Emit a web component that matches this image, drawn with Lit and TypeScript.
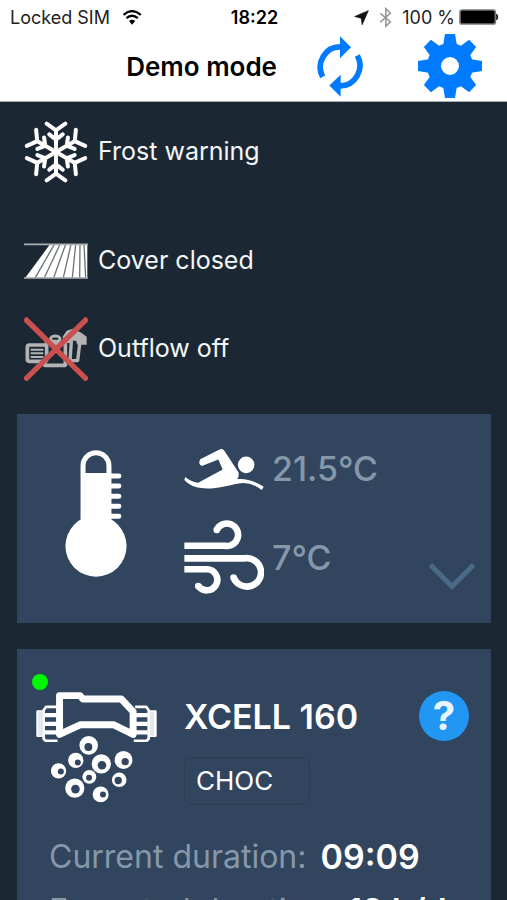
import { LitElement, html, css, svg } from "lit";
import { customElement } from "lit/decorators.js";

const wifiIcon = html`<svg class="wifi" viewBox="368 26 60 46" aria-hidden="true">
  <path d="M372 41 Q398 18 425 41" fill="none" stroke="#000" stroke-width="7" />
  <path d="M381 51 Q398 36 416 51" fill="none" stroke="#000" stroke-width="7" />
  <path d="M389 60 Q398 52 408 60 L398 71Z" fill="#000" />
</svg>`;

const locationIcon = html`<svg class="location" viewBox="306 28 46 46" aria-hidden="true">
  <path d="M350 30 L308 48 L328 53 L331 73Z" fill="#111" stroke="#111" stroke-width="2" />
</svg>`;

const bluetoothIcon = html`<svg class="bluetooth" viewBox="377 20 40 62" aria-hidden="true">
  <path d="M381 38 L412 64 L398 78 V24 L412 38 L381 65" fill="none" stroke="#9a9a9a" stroke-width="5" />
</svg>`;

const batteryIcon = html`<svg class="battery" viewBox="618 28 120 48" aria-hidden="true">
  <rect x="621" y="31" width="106" height="42" rx="7" fill="#000" stroke="#777" stroke-width="5" />
  <path d="M731 43 Q738 52 731 61Z" fill="#000" stroke="#000" stroke-width="2" />
</svg>`;

const refreshIcon = html`<svg class="refresh-icon" viewBox="191 105 138 182" aria-hidden="true">
  <g fill="none" stroke="currentColor" stroke-width="17">
    <path d="M208 227 A59 61 0 0 1 262 137" />
    <path d="M312 163 A59 61 0 0 1 260 254" />
  </g>
  <path d="M260 105 L293 138 L260 171Z M262 221 L228 253 L262 287Z" fill="currentColor" />
</svg>`;

const gearIcon = html`<svg class="gear-icon" viewBox="-32 -32 64 64" aria-hidden="true">
  <g fill="currentColor">
    ${[0, 45, 90, 135, 180, 225, 270, 315].map(
      (a) => svg`<path d="M-7 -20 L-5 -32 H5 L7 -20Z" transform="rotate(${a})" />`
    )}
  </g>
  <circle r="16" fill="none" stroke="currentColor" stroke-width="14" />
</svg>`;

const snowIcon = html`<svg class="snow" viewBox="-96 -93 192 186" aria-hidden="true">
  <g fill="none" stroke="#fff" stroke-width="12" stroke-linecap="round">
    ${[0, 60, 120, 180, 240, 300].map(
      (a) => svg`<path d="M0 0 V-66 M-28 -85 L0 -65 L28 -85 M-20 -53 L0 -37 L20 -53" transform="rotate(${a})" />`
    )}
  </g>
</svg>`;

const coverIcon = html`<svg class="cover" viewBox="44 38 192 108" aria-hidden="true">
  <path d="M122 42 H234 V142 H48Z" fill="#fff" />
  <g stroke="#6d7478" stroke-width="4">
    <path d="M135 42 L78 142 M152 42 L105 142 M169 42 L133 142 M185 42 L162 142 M199 42 L189 142 M212 42 L211 142 M224 42 L229 142" />
  </g>
  <path d="M44 42 H236 M44 143 H236" stroke="#a9b0b4" stroke-width="5" />
</svg>`;

const outflowIcon = html`<svg class="outflow" viewBox="44 262 192 190" aria-hidden="true">
  <g fill="none" stroke="#b3b3b3" stroke-width="11" stroke-linejoin="round">
    <rect x="54" y="345" width="58" height="49" rx="6" />
    <path d="M64 359 H102 M64 370 H102 M64 381 H102" stroke-width="6" />
    <path d="M106 340 H168 V406 H106 V392" />
    <ellipse cx="138" cy="326" rx="14" ry="8" stroke-width="9" />
    <path d="M124 332 V342 M152 332 V342" />
    <path d="M172 334 H186 L182 392 H205 L212 334" stroke-width="10" />
  </g>
  <path d="M160 320 L172 302 L190 296 L216 308 L232 320 V344 H204 L200 332 H162Z" fill="#b3b3b3" />
  <path d="M46 265 L234 450 M234 265 L46 450" stroke="#c9504f" stroke-width="16" />
</svg>`;

const thermometerIcon = html`<svg class="thermometer" viewBox="45 45 186 382" aria-hidden="true">
  <path d="M99 260 V92 A39 39 0 0 1 177 92 V260" fill="none" stroke="#fff" stroke-width="15" />
  <path d="M95 114 H180 V270 H95Z" fill="#fff" />
  <circle cx="138" cy="334" r="92" fill="#fff" />
  <path d="M178 123 H207 M178 153 H207 M178 184 H207 M178 214 H207 M178 244 H207" stroke="#fff" stroke-width="15" stroke-linecap="round" />
</svg>`;

const swimmerIcon = html`<svg class="swimmer" viewBox="42 38 240 127" aria-hidden="true">
  <path d="M90 72 L150 42 Q158 38 163 46 L206 112 Q208 128 202 132 Q240 128 282 155 L276 165 Q240 138 206 145 C170 152 140 162 100 160 Q62 158 42 135 L45 126 Q60 140 84 143 L158 103 L145 73 L97 92 Q82 88 90 72Z" fill="#fff" />
  <circle cx="229" cy="89" r="25" fill="#fff" />
</svg>`;

const windIcon = html`<svg class="wind" viewBox="42 254 240 227" aria-hidden="true">
  <g fill="none" stroke="#fff" stroke-width="20">
    <path d="M42 332 H164 A34 34 0 1 0 140 284" />
    <path d="M42 370 H225 A43 43 0 1 1 191 428" />
    <path d="M42 403 H112 A32 32 0 1 1 84 454" />
  </g>
  <g fill="#fff"><circle cx="140" cy="284" r="10" /><circle cx="191" cy="428" r="10" /><circle cx="84" cy="454" r="10" /></g>
</svg>`;

const chevronIcon = html`<svg class="chevron-icon" viewBox="86 69 138 80" aria-hidden="true">
  <path d="M90 74 L155 139 L220 74" fill="none" stroke="#4b6a87" stroke-width="15" />
</svg>`;

const bubbles = [
  [206, 257, 28, 205, 262, 12],
  [167, 302, 23, 173, 309, 9],
  [244, 313, 29, 246, 317, 13],
  [311, 301, 27, 316, 306, 11],
  [115, 334, 23, 122, 336, 9],
  [208, 352, 21, 207, 355, 9],
  [298, 361, 22, 295, 363, 11],
  [164, 386, 29, 166, 389, 13],
  [242, 405, 24, 249, 405, 9],
];

const cellIcon = html`<svg class="cell" viewBox="47 97 365 333" aria-hidden="true">
  <path d="M118 224 V107 H180 L188 117 H304 L340 155 V224 L282 195 H180Z" fill="none" stroke="#fff" stroke-width="21" stroke-linejoin="round" />
  <g fill="none" stroke="#fff" stroke-width="8" stroke-linejoin="round">
    <path d="M111 141 H77 L70 151 V237 L76 243 H112 M70 155 H52 V228 H70" />
    <path d="M346 141 H380 L387 151 V237 L381 243 H342 M387 155 H407 V228 H387" />
  </g>
  <path d="M73 166 H112 M73 192 H112 M73 218 H112 M345 166 H384 M345 192 H384 M345 218 H384" stroke="#fff" stroke-width="13" />
  <path d="M61 156 V228 M397 156 V228" stroke="#e4e8ec" stroke-width="14" />
  ${bubbles.map(
    ([x, y, r, hx, hy, hr]) => svg`<circle cx=${x} cy=${y} r=${r} fill="#fff" /><circle cx=${hx} cy=${hy} r=${hr} fill="#31455f" />`
  )}
</svg>`;

@customElement("app-root")
export class AppRoot extends LitElement {
  static styles = css`
    :host {
      display: flex;
      flex-direction: column;
      height: 100vh;
      overflow: hidden;
      background: #1b2833;
      color: #f4f7fa;
      font-family: Inter, "Liberation Sans", sans-serif;
    }
    * { box-sizing: border-box; }
    svg { display: block; flex: none; }
    h1, h2, ul, dl, dd, dt, p { margin: 0; padding: 0; font-weight: 400; }
    button {
      display: block;
      flex: none;
      border: 0;
      padding: 0;
      background: none;
      color: #007aff;
      font: inherit;
      cursor: pointer;
    }
    header {
      flex: none;
      background: #fff;
      color: #000;
      border-bottom: 1px solid #a5abb0;
    }
    .status {
      display: grid;
      grid-template-columns: 1fr auto 1fr;
      align-items: center;
      height: 34px;
      padding: 0 8px 0 10px;
      font-size: 18px;
      color: #222;
    }
    .side { display: flex; align-items: center; gap: 12px; }
    .end { justify-content: flex-end; gap: 4px; }
    .clock { font-weight: 600; color: #000; }
    .wifi { width: 20px; height: 15px; }
    .location { width: 15px; height: 15px; }
    .bluetooth { width: 13px; height: 21px; margin: 0 6px; }
    .battery { width: 40px; height: 16px; }
    .bar {
      display: flex;
      align-items: center;
      justify-content: flex-end;
      height: 67px;
      padding: 0 25px 3px;
    }
    h1 { font-size: 26px; font-weight: 600; margin-right: 40px; }
    .refresh { margin-right: 55px; }
    .refresh-icon { width: 46px; height: 61px; }
    .gear-icon { width: 64px; height: 64px; }
    main {
      flex: 1;
      min-height: 0;
      overflow-y: auto;
      scrollbar-width: none;
      padding: 0 16px 16px 17px;
    }
    .alerts {
      list-style: none;
      padding: 19px 0 33px 7px;
      font-size: 25px;
      line-height: 28px;
    }
    .alerts li { display: flex; align-items: center; gap: 10px; }
    .alerts span { padding-bottom: 2px; }
    .snow { width: 64px; height: 62px; }
    .cover { width: 64px; height: 36px; }
    .outflow { width: 64px; height: 64px; }
    .frost { margin-bottom: 60px; }
    .closed { margin-bottom: 38px; height: 36px; }
    .card { position: relative; background: #31455f; }
    .climate {
      display: flex;
      align-items: flex-start;
      padding: 34px 16px 28px 48px;
      margin-bottom: 26px;
    }
    .thermometer { width: 62px; height: 127px; margin: 2px 57px 0 0; }
    .readings { flex: 1; display: grid; gap: 30px; }
    .reading {
      display: flex;
      align-items: center;
      gap: 8px;
      font-size: 34px;
      line-height: 40px;
      font-weight: 500;
      color: #8598aa;
    }
    .swimmer { width: 80px; height: 42px; }
    .wind { width: 80px; height: 75px; }
    .chevron { align-self: flex-end; margin-bottom: 5px; }
    .chevron-icon { width: 46px; height: 27px; }
    .device { padding-top: 43px; }
    .led {
      position: absolute;
      left: 15px;
      top: 25px;
      width: 16px;
      height: 16px;
      border-radius: 50%;
      background: #00f900;
    }
    .summary { display: flex; gap: 27px; padding: 0 22px 0 19px; }
    .cell { width: 121px; height: 111px; }
    .info { flex: 1; }
    .name { display: flex; align-items: center; justify-content: space-between; height: 48px; }
    h2 { font-size: 34px; font-weight: 600; color: #fff; }
    .help {
      width: 50px;
      height: 50px;
      border-radius: 50%;
      background: #2196f3;
      color: #e8f5ff;
      font-size: 40px;
      line-height: 50px;
      font-weight: 700;
    }
    select {
      display: block;
      appearance: none;
      margin-top: 17px;
      width: 126px;
      height: 48px;
      padding: 0 11px 2px;
      border: 1px solid #2b3d54;
      border-radius: 8px;
      background: transparent;
      color: #fff;
      font: inherit;
      font-size: 26px;
    }
    dl {
      display: grid;
      gap: 2px;
      padding: 26px 32px 24px;
      font-size: 32px;
      line-height: 52px;
    }
    .row { display: flex; gap: 14px; }
    dt { color: #8598aa; }
    dd { font-size: 34px; font-weight: 600; color: #fff; }
  `;

  render() {
    return html`
      <header>
        <div class="status">
          <div class="side"><span>Locked SIM</span>${wifiIcon}</div>
          <span class="clock">18:22</span>
          <div class="side end">${locationIcon}${bluetoothIcon}<span>100 %</span>${batteryIcon}</div>
        </div>
        <div class="bar">
          <h1>Demo mode</h1>
          <button class="refresh" aria-label="Refresh">${refreshIcon}</button>
          <button aria-label="Settings">${gearIcon}</button>
        </div>
      </header>
      <main>
        <ul class="alerts">
          <li class="frost">${snowIcon}<span>Frost warning</span></li>
          <li class="closed">${coverIcon}<span>Cover closed</span></li>
          <li>${outflowIcon}<span>Outflow off</span></li>
        </ul>
        <section class="card climate" aria-label="Temperatures">
          ${thermometerIcon}
          <div class="readings">
            <div class="reading">${swimmerIcon}<span>21.5°C</span></div>
            <div class="reading">${windIcon}<span>7°C</span></div>
          </div>
          <button class="chevron" aria-label="Expand">${chevronIcon}</button>
        </section>
        <section class="card device">
          <span class="led"></span>
          <div class="summary">
            ${cellIcon}
            <div class="info">
              <div class="name">
                <h2>XCELL 160</h2>
                <button class="help" aria-label="Help">?</button>
              </div>
              <select aria-label="Mode"><option>CHOC</option></select>
            </div>
          </div>
          <dl>
            <div class="row"><dt>Current duration:</dt><dd>09:09</dd></div>
            <div class="row"><dt>Expected duration:</dt><dd>12 h/d</dd></div>
          </dl>
        </section>
      </main>
    `;
  }
}
